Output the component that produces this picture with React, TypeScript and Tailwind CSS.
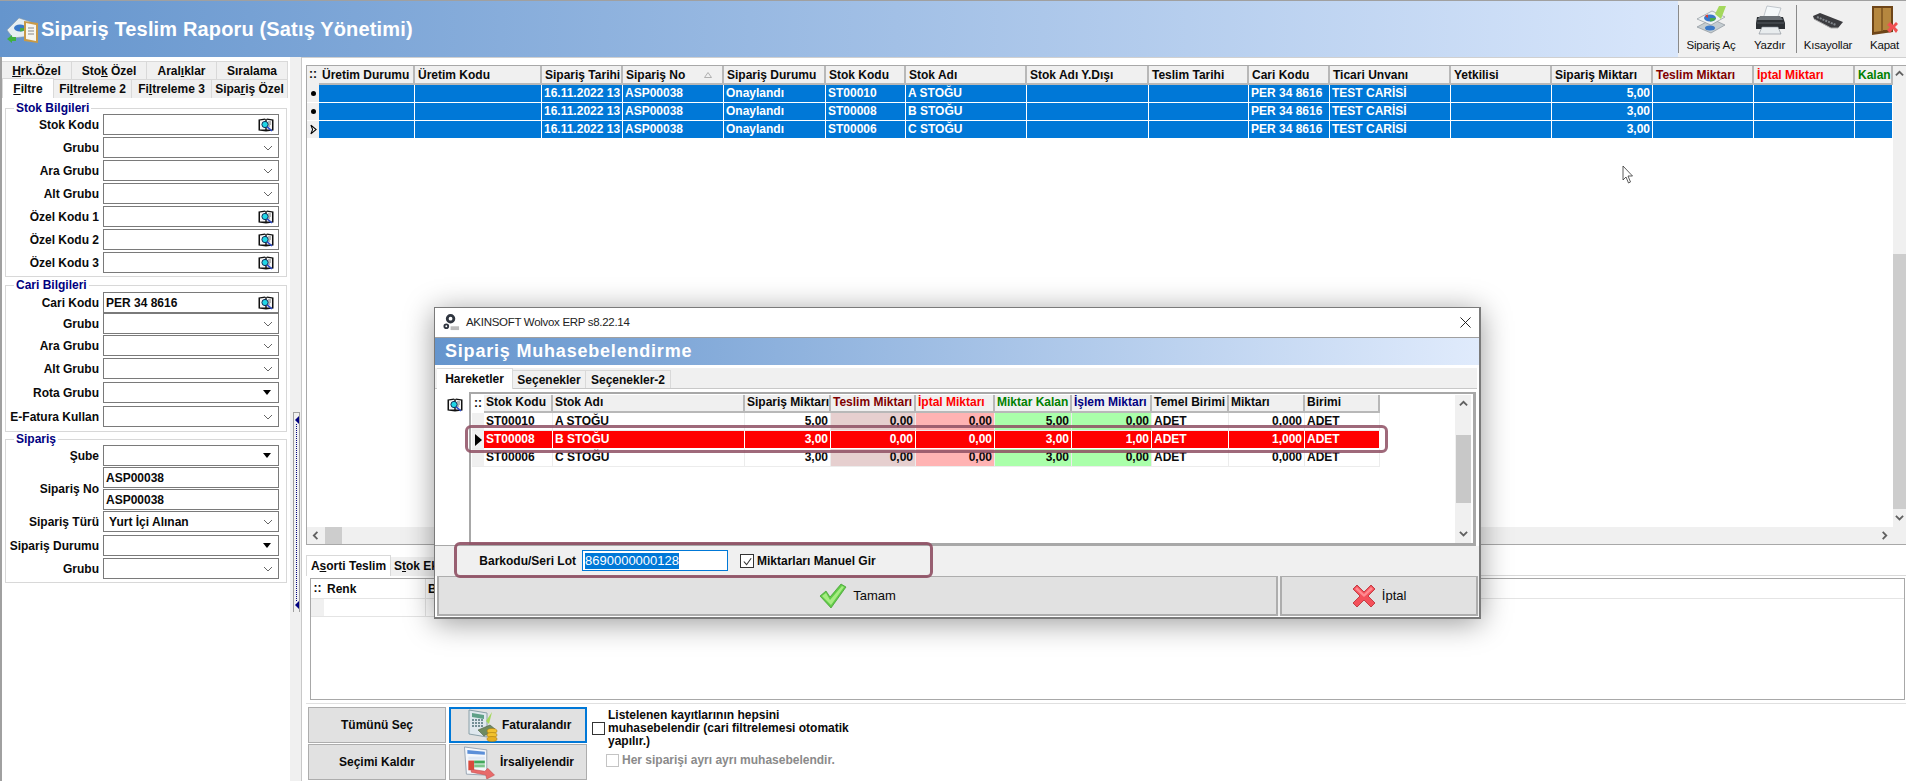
import type { ReactNode } from "react";

type Col = {
  label: string;
  w: string;
  color?: string;
  right?: boolean;
  bg?: string;
  sort?: boolean;
};

const topCols: Col[] = [
  { label: "Üretim Durumu", w: "w-[96px]" },
  { label: "Üretim Kodu", w: "w-[127px]" },
  { label: "Sipariş Tarihi", w: "w-[81px]" },
  { label: "Sipariş No", w: "w-[101px]", sort: true },
  { label: "Sipariş Durumu", w: "w-[102px]" },
  { label: "Stok Kodu", w: "w-[80px]" },
  { label: "Stok Adı", w: "w-[121px]" },
  { label: "Stok Adı Y.Dışı", w: "w-[122px]" },
  { label: "Teslim Tarihi", w: "w-[100px]" },
  { label: "Cari Kodu", w: "w-[81px]" },
  { label: "Ticari Unvanı", w: "w-[121px]" },
  { label: "Yetkilisi", w: "w-[101px]" },
  { label: "Sipariş Miktarı", w: "w-[101px]", right: true },
  { label: "Teslim Miktarı", w: "w-[101px]", color: "text-[#800000]" },
  { label: "İptal Miktarı", w: "w-[101px]", color: "text-[#ff0000]" },
  { label: "Kalan", w: "w-[38px]", color: "text-[#008000]" },
];

const topRows = [
  ["", "", "16.11.2022 13", "ASP00038", "Onaylandı", "ST00010", "A STOĞU", "", "", "PER 34 8616", "TEST CARİSİ", "", "5,00", "", "", ""],
  ["", "", "16.11.2022 13", "ASP00038", "Onaylandı", "ST00008", "B STOĞU", "", "", "PER 34 8616", "TEST CARİSİ", "", "3,00", "", "", ""],
  ["", "", "16.11.2022 13", "ASP00038", "Onaylandı", "ST00006", "C STOĞU", "", "", "PER 34 8616", "TEST CARİSİ", "", "3,00", "", "", ""],
];

const dlgCols: Col[] = [
  { label: "Stok Kodu", w: "w-[69px]" },
  { label: "Stok Adı", w: "w-[192px]" },
  { label: "Sipariş Miktarı", w: "w-[86px]", right: true },
  { label: "Teslim Miktarı", w: "w-[85px]", color: "text-[#800000]", right: true, bg: "bg-[#e6cfcf]" },
  { label: "İptal Miktarı", w: "w-[79px]", color: "text-[#ff0000]", right: true, bg: "bg-[#ffb3b3]" },
  { label: "Miktar Kalan", w: "w-[77px]", color: "text-[#008000]", right: true, bg: "bg-[#aaffaa]" },
  { label: "İşlem Miktarı", w: "w-[80px]", color: "text-[#000080]", right: true, bg: "bg-[#aaffaa]" },
  { label: "Temel Birimi", w: "w-[77px]" },
  { label: "Miktarı", w: "w-[76px]", right: true },
  { label: "Birimi", w: "w-[75px]" },
];

const dlgRows = [
  ["ST00010", "A STOĞU", "5,00", "0,00", "0,00", "5,00", "0,00", "ADET", "0,000", "ADET"],
  ["ST00008", "B STOĞU", "3,00", "0,00", "0,00", "3,00", "1,00", "ADET", "1,000", "ADET"],
  ["ST00006", "C STOĞU", "3,00", "0,00", "0,00", "3,00", "0,00", "ADET", "0,000", "ADET"],
];

function BookIcon({ className = "" }: { className?: string }) {
  return (
    <svg viewBox="0 0 16 14" className={`w-[16px] h-[14px] ${className}`}>
      <path d="M0.5 1.5 L7 0.5 L8 1.5 L9 0.5 L15.5 1.5 V12.5 L8 13.5 L0.5 12.5 Z" fill="#111" />
      <path d="M2 2.5 L7.3 1.8 V11.5 L2 11.5 Z M8.7 1.8 L14 2.5 V11.5 H8.7 Z" fill="#f4f4f4" />
      <path d="M10 4 H13 M10 6 H13 M10 8 H12" stroke="#555" strokeWidth="0.8" />
      <circle cx="7" cy="6.5" r="3.1" fill="#1fd6e6" stroke="#10305a" strokeWidth="1" />
      <path d="M9.2 8.8 L14 13" stroke="#2a48c8" strokeWidth="1.6" />
    </svg>
  );
}

function ThinChevron() {
  return (
    <svg viewBox="0 0 10 6" className="w-[10px] h-[6px]">
      <path d="M1 1 L5 5 L9 1" fill="none" stroke="#666" strokeWidth="1" />
    </svg>
  );
}

function BlackTriangle() {
  return (
    <svg viewBox="0 0 8 5" className="w-[8px] h-[5px]">
      <path d="M0 0 H8 L4 5 Z" fill="#000" />
    </svg>
  );
}

function ScrollArrow({ dir }: { dir: "up" | "down" | "left" | "right" }) {
  const d = {
    up: "M1 6 L5 2 L9 6",
    down: "M1 2 L5 6 L9 2",
    left: "M6 1 L2 5 L6 9",
    right: "M3 1 L7 5 L3 9",
  }[dir];
  return (
    <svg viewBox="0 0 10 10" className="w-[9px] h-[9px]">
      <path d={d} fill="none" stroke="#606060" strokeWidth="2" />
    </svg>
  );
}

function Tab({
  w,
  h = "h-[18px]",
  active,
  children,
}: {
  w: string;
  h?: string;
  active?: boolean;
  children: ReactNode;
}) {
  return (
    <div
      className={`${w} ${h} flex items-center justify-center whitespace-nowrap border-t border-r border-[#d9d9d9] ${
        active ? "bg-white border-l" : "bg-[#f0f0f0]"
      }`}
    >
      {children}
    </div>
  );
}

function Field({
  label,
  value,
  kind,
  gap = "mt-[2px]",
}: {
  label?: string;
  value?: string;
  kind?: "book" | "chev" | "tri";
  gap?: string;
}) {
  return (
    <div className={`flex items-center h-[21px] ${gap}`}>
      <div className="w-[97px] pr-[4px] text-right whitespace-nowrap flex justify-end">{label}</div>
      <Input value={value} kind={kind} />
    </div>
  );
}

function Input({ value, kind }: { value?: string; kind?: "book" | "chev" | "tri" }) {
  return (
    <div className="w-[176px] h-[21px] border border-[#7a7a7a] bg-white flex items-center justify-between pl-[2px] pr-[4px]">
      <span className="whitespace-pre">{value}</span>
      {kind === "book" && <BookIcon />}
      {kind === "chev" && (
        <span className="pr-[1px]">
          <ThinChevron />
        </span>
      )}
      {kind === "tri" && (
        <span className="pr-[3px]">
          <BlackTriangle />
        </span>
      )}
    </div>
  );
}

function Legend({ children }: { children: ReactNode }) {
  return <legend className="ml-[8px] px-[2px] leading-[14px] text-[#000080]">{children}</legend>;
}

function FilterPanel() {
  return (
    <div className="w-[290px] shrink-0 border-l-2 border-[#a0a0a0] pt-[4px] bg-white">
      <div className="flex">
        <Tab w="w-[70px]">
          <span>
            <u>H</u>rk.Özel
          </span>
        </Tab>
        <Tab w="w-[75px]">
          <span>
            Sto<u>k</u> Özel
          </span>
        </Tab>
        <Tab w="w-[70px]">
          <span>
            Aral<u>ı</u>klar
          </span>
        </Tab>
        <Tab w="w-[71px]">Sıralama</Tab>
      </div>
      <div className="flex border-b border-[#d9d9d9] w-[286px] h-[19px]">
        <Tab w="w-[52px]" h="h-[20px] -mt-[1px]" active>
          <span>
            <u>F</u>iltre
          </span>
        </Tab>
        <Tab w="w-[78px]" h="h-[19px]">
          <span>
            Fi<u>l</u>treleme 2
          </span>
        </Tab>
        <Tab w="w-[80px]" h="h-[19px]">
          <span>
            Fi<u>l</u>treleme 3
          </span>
        </Tab>
        <Tab w="w-[76px]" h="h-[19px]">
          <span>
            Sipa<u>r</u>iş Özel
          </span>
        </Tab>
      </div>

      <fieldset className="ml-[3px] mt-[3px] w-[282px] border border-[#d8d8d8] pb-[3px]">
        <Legend>Stok Bilgileri</Legend>
        <Field label="Stok Kodu" kind="book" gap="-mt-[1px]" />
        <Field label="Grubu" kind="chev" />
        <Field label="Ara Grubu" kind="chev" />
        <Field label="Alt Grubu" kind="chev" />
        <Field label="Özel Kodu 1" kind="book" />
        <Field label="Özel Kodu 2" kind="book" />
        <Field label="Özel Kodu 3" kind="book" />
      </fieldset>

      <fieldset className="ml-[3px] mt-[1px] w-[282px] border border-[#d8d8d8] pb-[4px]">
        <Legend>Cari Bilgileri</Legend>
        <Field label="Cari Kodu" value="PER 34 8616" kind="book" gap="mt-0" />
        <Field label="Grubu" kind="chev" gap="mt-0" />
        <Field label="Ara Grubu" kind="chev" gap="mt-[1px]" />
        <Field label="Alt Grubu" kind="chev" />
        <Field label="Rota Grubu" kind="tri" gap="mt-[3px]" />
        <Field label="E-Fatura Kullan" kind="chev" gap="mt-[3px]" />
      </fieldset>

      <fieldset className="ml-[3px] w-[282px] border border-[#d8d8d8] pb-[3px]">
        <Legend>Sipariş</Legend>
        <Field label="Şube" kind="tri" gap="-mt-[1px]" />
        <div className="flex items-center mt-[1px]">
          <div className="w-[97px] pr-[4px] text-right">Sipariş No</div>
          <div className="flex flex-col gap-[1px]">
            <Input value="ASP00038" />
            <Input value="ASP00038" />
          </div>
        </div>
        <Field label="Sipariş Türü" value=" Yurt İçi Alınan" kind="chev" gap="mt-[1px]" />
        <Field label="Sipariş Durumu" kind="tri" gap="mt-[3px]" />
        <Field label="Grubu" kind="chev" />
      </fieldset>
    </div>
  );
}

function Splitter() {
  return (
    <div className="w-[12px] shrink-0 bg-[#f0f0f0] pt-[355px] border-r border-[#c8c8c8]">
      <div className="ml-[3px] w-[7px] h-[200px] border border-[#a0a0a0] flex flex-col justify-between items-center py-[3px] bg-[#f0f0f0] border-b-0">
        <div className="w-0 h-0 border-y-[4px] border-y-transparent border-r-[4px] border-r-[#000080]" />
        <div className="flex-1 border-l border-dotted border-[#000080]" />
        <div className="w-0 h-0 border-y-[4px] border-y-transparent border-r-[4px] border-r-[#000080]" />
      </div>
    </div>
  );
}

function TopGrid() {
  return (
    <div className="flex flex-col h-[480px] border-t border-l border-[#a8a8a8] border-b">
      <div className="flex flex-1 min-h-0">
        <div className="flex-1 bg-white">
          <div className="flex">
            <div className="w-[12px] h-[19px] bg-[#f0f0f0] text-center leading-[17px]">::</div>
            {topCols.map((c) => (
              <div
                key={c.label}
                className={`${c.w} h-[19px] bg-[#f0f0f0] border-r-2 border-b-2 border-[#b8b8b8] pl-[3px] flex items-center justify-between overflow-hidden whitespace-nowrap ${c.color ?? ""}`}
              >
                <span>{c.label}</span>
                {c.sort && (
                  <svg viewBox="0 0 8 6" className="w-[8px] h-[6px] mr-[10px] shrink-0">
                    <path d="M4 0.5 L7.5 5.5 H0.5 Z" fill="none" stroke="#b0b0b0" />
                  </svg>
                )}
              </div>
            ))}
          </div>
          {topRows.map((r, i) => (
            <div className="flex" key={i}>
              <div className="w-[12px] h-[18px] bg-[#f0f0f0] border-b border-white flex items-center justify-center">
                {i < 2 ? (
                  <div className="w-[5px] h-[5px] rounded-full bg-black" />
                ) : (
                  <svg viewBox="0 0 8 12" className="w-[7px] h-[11px]">
                    <path d="M1 1 L7 6 L1 11 L3 6 Z" fill="#fff" stroke="#000" strokeWidth="1.2" />
                  </svg>
                )}
              </div>
              {topCols.map((c, j) => (
                <div
                  key={c.label}
                  className={`${c.w} h-[18px] bg-[#0078d7] text-white border-r border-b border-white px-[2px] leading-[17px] overflow-hidden whitespace-nowrap ${c.right ? "text-right" : ""}`}
                >
                  {r[j]}
                </div>
              ))}
            </div>
          ))}
        </div>
        <div className="w-[14px] bg-[#f0f0f0] flex flex-col">
          <div className="h-[16px] flex items-center justify-center">
            <ScrollArrow dir="up" />
          </div>
          <div className="mt-[172px] h-[255px] bg-[#cdcdcd]" />
          <div className="flex-1 flex items-center justify-center">
            <ScrollArrow dir="down" />
          </div>
        </div>
      </div>
      <div className="h-[17px] bg-[#f0f0f0] flex items-center">
        <div className="w-[18px] flex justify-center">
          <ScrollArrow dir="left" />
        </div>
        <div className="w-[17px] h-full bg-[#cdcdcd]" />
        <div className="flex-1" />
        <div className="w-[30px] flex justify-start pl-[4px]">
          <ScrollArrow dir="right" />
        </div>
      </div>
    </div>
  );
}

function BottomPane() {
  return (
    <div>
      <div className="mt-[10px] flex h-[21px] border-b border-[#d9d9d9]">
        <Tab w="w-[85px]" h="h-[21px] border-b-0" active>
          <span>
            A<u>s</u>orti Teslim
          </span>
        </Tab>
        <div className="w-[60px] h-[19px] mt-[2px] pl-[3px] bg-[#f0f0f0] overflow-hidden whitespace-nowrap">
          S<u>t</u>ok Ek
        </div>
      </div>
      <div className="ml-[4px] mt-[2px] h-[122px] mr-px border border-[#a8a8a8] bg-white">
        <div className="flex h-[20px] border-b border-[#e4e4e4]">
          <div className="w-[13px] text-center">::</div>
          <div className="w-[102px] pl-[3px] border-r border-[#e4e4e4] leading-[20px]">Renk</div>
          <div className="flex-1 pl-[2px] leading-[20px]">Beden</div>
        </div>
        <div className="flex h-[18px] border-b border-[#e4e4e4] w-[300px]">
          <div className="w-[13px] bg-[#f0f0f0]" />
          <div className="w-[102px] border-r border-[#e4e4e4]" />
        </div>
      </div>
      <div className="mt-[3px] border-t border-[#e0e0e0]" />
      <div className="flex mt-[3px] ml-[2px]">
        <div className="flex flex-col gap-[1px]">
          <Btn w="w-[138px]">Tümünü Seç</Btn>
          <Btn w="w-[138px]">Seçimi Kaldır</Btn>
        </div>
        <div className="flex flex-col gap-[1px] ml-[3px]">
          <div className="w-[138px] h-[36px] border-2 border-[#0078d7] bg-[#e1e1e1] flex items-center pl-[17px] gap-[4px]">
            <FaturaIcon />
            <span>Faturalandır</span>
          </div>
          <div className="w-[138px] h-[36px] border border-[#adadad] bg-[#e1e1e1] flex items-center pl-[13px] gap-[4px]">
            <IrsaliyeIcon />
            <span>İrsaliyelendir</span>
          </div>
        </div>
        <div className="ml-[5px] w-[260px] pt-[2px]">
          <div className="flex items-center">
            <div className="w-[13px] h-[13px] border border-[#333] bg-white shrink-0" />
            <div className="ml-[3px] leading-[13px] w-[250px]">
              Listelenen kayıtlarının hepsini muhasebelendir (cari filtrelemesi otomatik yapılır.)
            </div>
          </div>
          <div className="flex items-center ml-[14px] mt-[3px] text-[#8a8a8a]">
            <div className="w-[13px] h-[13px] border border-[#c4c4c4] bg-white shrink-0" />
            <div className="ml-[3px] whitespace-nowrap">Her siparişi ayrı ayrı muhasebelendir.</div>
          </div>
        </div>
      </div>
    </div>
  );
}

function Btn({ w, children }: { w: string; children: ReactNode }) {
  return (
    <div className={`${w} h-[36px] border border-[#adadad] bg-[#e1e1e1] flex items-center justify-center`}>
      {children}
    </div>
  );
}

function FaturaIcon() {
  return (
    <svg viewBox="0 0 30 33" className="w-[30px] h-[33px] shrink-0">
      <path d="M1 1 L19 4 V28 L1 25 Z" fill="#dfe8ee" stroke="#8aa0a8" />
      <path d="M4 4 L16 6 V10 L4 8 Z" fill="#5fa088" />
      <path d="M4 11 H16 M4 14 H16 M4 17 H16" stroke="#50707a" strokeWidth="1.4" strokeDasharray="2 1" />
      <path d="M24 3 L21 15 L18 12 Z" fill="#a4d85c" />
      <path d="M10 21 L22 16 L27 20 L16 27 Z" fill="#6f8a60" stroke="#4d6044" strokeWidth="0.6" />
      <ellipse cx="24" cy="22" rx="5" ry="2.5" fill="#f2c22e" stroke="#a87a10" strokeWidth="0.6" />
      <ellipse cx="24" cy="26" rx="5" ry="2.5" fill="#f2c22e" stroke="#a87a10" strokeWidth="0.6" />
      <ellipse cx="24" cy="30" rx="5" ry="2.5" fill="#e8b020" stroke="#a87a10" strokeWidth="0.6" />
    </svg>
  );
}

function IrsaliyeIcon() {
  return (
    <svg viewBox="0 0 33 34" className="w-[33px] h-[33px] shrink-0">
      <path d="M1 1 L24 4 V30 L3 29 Z" fill="#f4f7fb" stroke="#9aa6b4" />
      <path d="M4 4 L22 6 V9 L4 8 Z" fill="#5b8fd8" />
      <path d="M5 11 H22 V14 H5 Z" fill="#dfe8f4" />
      <path d="M5 15 H11 V25 H5 Z" fill="#d84a3c" />
      <path d="M11 15 H22 V18 H11 Z" fill="#41a85a" />
      <path d="M11 19 H22 V22 H11 Z" fill="#7cc68a" />
      <path d="M8 24 L22 26 L25 23 L32 30 L24 34 L23 30 L8 27 Z" fill="#e86a6a" stroke="#b84040" strokeWidth="0.5" />
    </svg>
  );
}

function Toolbar() {
  return (
    <div className="w-[228px] shrink-0 bg-[#f0f0f0] flex text-[11.5px] tracking-[-0.2px] font-normal text-[#111]">
      <div className="my-[4px] w-px bg-[#8a8a8a]" />
      <div className="w-[64px] flex flex-col items-center pt-[4px]">
        <svg viewBox="0 0 32 30" className="w-[32px] h-[30px]">
          <path d="M2 22 L17 14 L30 20 L16 28 Z" fill="#c4ccd0" stroke="#808890" strokeWidth="0.6" />
          <path d="M2 14 L17 6 L30 12 L16 20 Z" fill="#eef2f4" stroke="#808890" strokeWidth="0.6" />
          <ellipse cx="15" cy="13" rx="6" ry="3.5" fill="#3a78c8" />
          <path d="M15 13 L21 13 A6 3.5 0 0 1 15 16.5 Z" fill="#48a848" />
          <path d="M13 13 L10 11 A6 3.5 0 0 1 13 9.5 Z" fill="#d84038" />
          <ellipse cx="15" cy="23" rx="5" ry="2.5" fill="#3a78c8" />
          <path d="M24 1 L31 1 L26 14 L20 9 Z" fill="#a4d85c" />
        </svg>
        <span className="mt-[2px]">Sipariş Aç</span>
      </div>
      <div className="w-[53px] flex flex-col items-center pt-[4px]">
        <svg viewBox="0 0 32 30" className="w-[32px] h-[30px]">
          <path d="M13 1 L27 3 L23 14 H9 Z" fill="#f4f8fa" stroke="#a0a8b0" strokeWidth="0.6" />
          <path d="M3 12 H29 L31 18 V24 H2 V18 Z" fill="#2c3034" />
          <path d="M6 11 L26 11 L29 15 H3 Z" fill="#6c7278" />
          <path d="M8 22 H24 L27 29 H5 Z" fill="#e8ecee" stroke="#808890" strokeWidth="0.6" />
          <path d="M3 18 H30" stroke="#555b60" strokeWidth="1" />
        </svg>
        <span className="mt-[2px]">Yazdır</span>
      </div>
      <div className="my-[4px] w-px bg-[#8a8a8a]" />
      <div className="w-[62px] flex flex-col items-center pt-[4px]">
        <svg viewBox="0 0 32 30" className="w-[32px] h-[30px]">
          <path d="M1 11 L8 8 L31 17 L26 23 L19 23 L2 14 Z" fill="#3c3c40" />
          <path d="M5 12 L24 20" stroke="#80858a" strokeWidth="2" strokeDasharray="2 1" />
          <path d="M2 14 L19 23 L26 23" fill="none" stroke="#a8a8a8" strokeWidth="1" />
        </svg>
        <span className="mt-[2px]">Kısayollar</span>
      </div>
      <div className="flex-1 flex flex-col items-center pt-[4px] pl-[4px]">
        <svg viewBox="0 0 28 30" className="w-[28px] h-[30px]">
          <path d="M1 1 H22 V27 L1 30 Z" fill="#6e4518" />
          <path d="M3 3 H10 V26 L3 27 Z M12 3 H20 V25 H12 Z" fill="#b5873f" />
          <path d="M10 3 H12 V26 H10 Z" fill="#8a5f26" />
          <path d="M16 20 L19 17 L22 20 L25 17 L27 19 L24 22 L27 25 L25 28 L22 24 L19 28 L16 25 L19 22 Z" fill="#f05050" />
        </svg>
        <span className="mt-[2px]">Kapat</span>
      </div>
    </div>
  );
}

function Dialog() {
  return (
    <div className="absolute left-[434px] top-[307px] w-[1047px] h-[312px] bg-white border border-[#7a7a7a] border-r-[2px] border-b-[2px] shadow-[0_4px_28px_rgba(0,0,0,0.4)] flex flex-col">
      <div className="h-[30px] flex items-center justify-between pl-[8px] pr-[8px] font-normal text-[12px] border-b border-[#a0a0a0]">
        <div className="flex items-center gap-[6px]">
          <svg viewBox="0 0 18 18" className="w-[17px] h-[17px]">
            <circle cx="8" cy="5" r="3.5" fill="none" stroke="#303640" strokeWidth="3" />
            <circle cx="3.5" cy="13" r="2" fill="none" stroke="#303640" strokeWidth="2" />
            <path d="M8 13 H17 V17 H8 Z" fill="#bbb" />
          </svg>
          <span className="text-[11.5px] tracking-[-0.3px] text-[#222]">AKINSOFT Wolvox ERP s8.22.14</span>
        </div>
        <svg viewBox="0 0 12 12" className="w-[11px] h-[11px]">
          <path d="M0.5 0.5 L11.5 11.5 M11.5 0.5 L0.5 11.5" stroke="#111" strokeWidth="1" />
        </svg>
      </div>
      <div className="h-[27px] bg-gradient-to-r from-[#6595cd] to-[#e0ebfc] flex items-center pl-[10px] text-white text-[18px] tracking-[0.8px]">
        Sipariş Muhasebelendirme
      </div>
      <div className="h-[3px]" />
      <div className="h-[21px] bg-[#f0f0f0] border-b border-[#c8c8c8] flex items-end pl-[2px] mr-[2px]">
        <div className="w-[76px] h-[21px] bg-white border-t border-r border-[#d9d9d9] flex items-center justify-center -mb-px">
          Hareketler
        </div>
        <div className="w-[73px] h-[18px] border-t border-r border-[#d9d9d9] flex items-center justify-center">
          Seçenekler
        </div>
        <div className="w-[85px] h-[18px] border-t border-r border-[#d9d9d9] flex items-center justify-center">
          Seçenekler-2
        </div>
      </div>
      <div className="flex h-[157px] pt-[3px] border-b border-[#a8a8a8] mr-[3px]">
        <div className="w-[34px] pl-[12px] pt-[6px]">
          <BookIcon />
        </div>
        <div className="flex h-[153px] w-[1007px] border-2 border-[#a8a8a8] border-r-[3px] pl-[1px] pt-[1px]">
          <div className="w-[909px]">
            <div className="flex">
              <div className="w-[12px] h-[18px] text-center leading-[16px]">::</div>
              {dlgCols.map((c) => (
                <div
                  key={c.label}
                  className={`${c.w} h-[18px] bg-[#f0f0f0] border-r-2 border-b-2 border-[#b8b8b8] pl-[2px] whitespace-nowrap overflow-hidden leading-[15px] ${c.color ?? ""}`}
                >
                  {c.label}
                </div>
              ))}
            </div>
            {dlgRows.map((r, i) => (
              <div className="flex" key={r[0]}>
                <div className="w-[12px] h-[18px] bg-[#f0f0f0] border-b border-[#ececec] flex items-center justify-center">
                  {i === 1 && <div className="w-0 h-0 border-y-[6px] border-y-transparent border-l-[7px] border-l-black" />}
                </div>
                {dlgCols.map((c, j) => (
                  <div
                    key={c.label}
                    className={`${c.w} h-[18px] border-r border-b px-[2px] leading-[17px] whitespace-nowrap overflow-hidden ${c.right ? "text-right" : ""} ${
                      i === 1 ? "bg-[#ff0000] text-white border-white" : `border-[#ececec] ${c.bg ?? ""}`
                    }`}
                  >
                    {r[j]}
                  </div>
                ))}
              </div>
            ))}
          </div>
          <div className="flex-1" />
          <div className="w-[16px] bg-[#f0f0f0] flex flex-col items-center mr-[2px]">
            <div className="h-[18px] flex items-center">
              <ScrollArrow dir="up" />
            </div>
            <div className="mt-[22px] h-[68px] w-[15px] bg-[#c8c8c8]" />
            <div className="flex-1 flex items-end pb-[4px]">
              <ScrollArrow dir="down" />
            </div>
          </div>
        </div>
      </div>
      <div className="h-[30px] bg-[#f0f0f0] flex items-center pr-[3px]">
        <div className="w-[147px] text-right pr-[6px]">Barkodu/Seri Lot</div>
        <div className="w-[146px] h-[21px] -mt-[1px] border border-[#0078d7] bg-white flex items-center pl-[2px] font-normal text-[13px]">
          <span className="bg-[#0078d7] text-white leading-[16px]">8690000000128</span>
        </div>
        <div className="ml-[12px] w-[14px] h-[14px] border border-[#333] bg-white flex items-center justify-center">
          <svg viewBox="0 0 12 12" className="w-[11px] h-[11px]">
            <path d="M2 6 L5 9.5 L10 2.5" fill="none" stroke="#333" strokeWidth="1.2" />
          </svg>
        </div>
        <div className="ml-[3px]">Miktarları Manuel Gir</div>
      </div>
      <div className="flex gap-[2px] h-[40px] ml-[2px] pr-[1px] bg-[#f0f0f0]">
        <div className="w-[842px] border-2 border-[#adadad] bg-[#e1e1e1] flex items-center justify-center gap-[6px] font-normal text-[13px] border-t">
          <svg viewBox="0 0 28 26" className="w-[28px] h-[26px]">
            <path d="M1 13 L7 8 L11 14 L22 1 L27 4 L12 25 Z" fill="#62cc48" stroke="#3d9a2e" strokeWidth="0.7" />
            <path d="M3 13 L7 10 L11 17 L23 3 L25 4 L12 22 Z" fill="#a6ec82" />
          </svg>
          <span>Tamam</span>
        </div>
        <div className="w-[198px] border-2 border-[#adadad] bg-[#e1e1e1] flex items-center justify-center gap-[6px] font-normal text-[13px] border-t">
          <svg viewBox="0 0 24 24" className="w-[24px] h-[24px]">
            <path d="M1 5 L5 1 L12 8 L19 1 L23 5 L16 12 L23 19 L19 23 L12 16 L5 23 L1 19 L8 12 Z" fill="#f4505a" stroke="#b82830" strokeWidth="0.8" />
            <path d="M3 5 L5 3 L12 10 L19 3 L21 5 L12 13 Z" fill="#ff8a90" />
          </svg>
          <span>İptal</span>
        </div>
      </div>
    </div>
  );
}

export default function App() {
  return (
    <div className="relative w-[1906px] h-[781px] overflow-hidden bg-white text-[12px] font-bold text-[#0a0a0a] font-['Liberation_Sans',Arial,sans-serif]">
      <div className="h-[57px] border-t border-[#a0a0a0] flex">
        <div className="flex-1 bg-gradient-to-r from-[#6595cd] to-[#d8e6fb] flex items-center pl-[5px] gap-[2px]">
          <svg viewBox="0 0 34 30" className="w-[34px] h-[30px]">
            <path d="M2 16 L14 4 L26 8 L26 22 L8 24 Z" fill="#e6eef2" stroke="#8a9aa6" strokeWidth="0.6" />
            <ellipse cx="15" cy="14" rx="6" ry="3.5" fill="#3a78c8" />
            <path d="M15 14 L21 14 A6 3.5 0 0 1 15 17.5 Z" fill="#48a848" />
            <path d="M19 7 L33 9 V29 L19 27 Z" fill="#c89a48" />
            <path d="M21 9 L31 11 V27 L21 25 Z" fill="#f6f6f0" />
            <path d="M23 14 H29 M23 17 H29 M23 20 H29" stroke="#888" />
            <path d="M2 25 L7 21 V23 H11 V27 H7 V29 Z" fill="#40b040" />
          </svg>
          <span className="text-white text-[20px] tracking-[0.15px] whitespace-nowrap">
            Sipariş Teslim Raporu (Satış Yönetimi)
          </span>
        </div>
        <Toolbar />
      </div>
      <div className="flex h-[724px]">
        <FilterPanel />
        <Splitter />
        <div className="flex-1 min-w-0">
          <div className="h-[8px] border-t border-[#d0d0d0]" />
          <div className="pl-[4px]">
            <TopGrid />
            <BottomPane />
          </div>
        </div>
      </div>

      <Dialog />

      <div className="absolute left-[465px] top-[425px] w-[923px] h-[28px] rounded-md border-[3px] border-[#8e4f63]/85" />
      <div className="absolute left-[454px] top-[542px] w-[479px] h-[36px] rounded-md border-[3px] border-[#8e4f63]/90" />

      <svg viewBox="0 0 12 19" className="absolute left-[1622px] top-[165px] w-[12px] h-[19px]">
        <path d="M1 1 V15 L4 12 L6.5 18 L8.5 17 L6 11 L10.5 11 Z" fill="#fff" stroke="#333" strokeWidth="0.8" />
      </svg>
    </div>
  );
}
